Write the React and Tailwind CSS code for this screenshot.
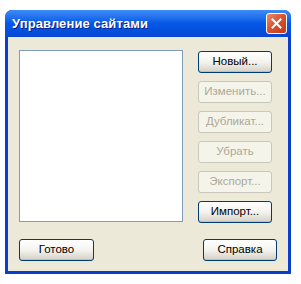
import React from "react";

const Btn = ({ children, disabled, className = "" }) => (
  <div
    className={`h-[22px] w-[74px] flex items-center justify-center rounded-[3px] border text-[11.5px] ${
      disabled
        ? "border-[#c9c7ba] bg-[#f5f4ea] text-[#aca899]"
        : "border-[#003c74] bg-gradient-to-b from-white via-[#f4f3ee] to-[#d6d0c5] text-black shadow-[inset_0_-1px_0_#c3c0b0]"
    } ${className}`}
  >
    {children}
  </div>
);

export default function App() {
  return (
    <div
      className="w-[301px] h-[284px] bg-white pt-[10px] pl-[5px]"
      style={{ fontFamily: "'Liberation Sans', Arial, sans-serif" }}
    >
      <div className="w-[286px] h-[264px] flex flex-col rounded-t-[7px] bg-[#0a3fcc] overflow-hidden">
        {/* title bar */}
        <div className="h-[27px] flex items-center justify-between pl-[7px] pr-[4px] bg-gradient-to-b from-[#3d8bf7] via-[#0558e6] to-[#0747d5]">
          <span
            className="text-white font-bold text-[13px] tracking-[0.1px]"
            style={{ textShadow: "1px 1px 0 #0a1e8a" }}
          >
            Управление сайтами
          </span>
          <div className="w-[21px] h-[21px] rounded-[3px] border border-white bg-gradient-to-br from-[#e88a6a] via-[#d9502c] to-[#c43b18] flex items-center justify-center">
            <svg width="11" height="11" viewBox="0 0 11 11">
              <path d="M1.5 1.5 L9.5 9.5 M9.5 1.5 L1.5 9.5" stroke="white" strokeWidth="2" strokeLinecap="square" />
            </svg>
          </div>
        </div>
        {/* body */}
        <div className="flex-1 mx-[3px] mb-[3px] bg-[#ece9d8] pt-[13px] px-[11px] flex flex-col">
          <div className="flex gap-[15px]">
            <div className="w-[164px] h-[172px] bg-white border border-[#7f9db9]" />
            <div className="flex flex-col gap-[8px] pt-[1px]">
              <Btn>Новый...</Btn>
              <Btn disabled>Изменить...</Btn>
              <Btn disabled>Дубликат...</Btn>
              <Btn disabled>Убрать</Btn>
              <Btn disabled>Экспорт...</Btn>
              <Btn>Импорт...</Btn>
            </div>
          </div>
          <div className="flex justify-between mt-[16px]">
            <Btn className="w-[75px]">Готово</Btn>
            <Btn>Справка</Btn>
          </div>
        </div>
      </div>
    </div>
  );
}
